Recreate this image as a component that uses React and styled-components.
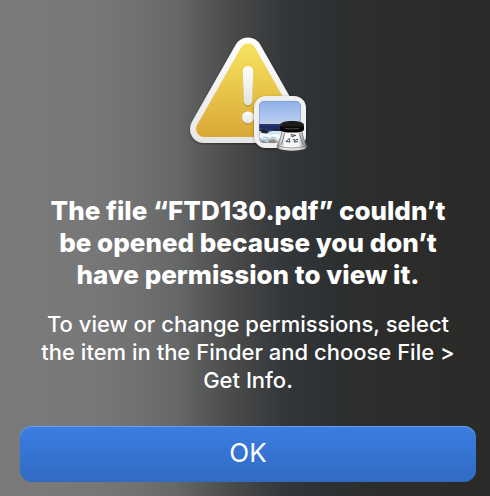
import React from 'react'
import styled, { createGlobalStyle } from 'styled-components'

const GlobalStyle = createGlobalStyle`
*{
  box-sizing:border-box;
}
body{
  margin:0;
  font-family:Inter, "Liberation Sans", sans-serif;
  background-color:#2c2c2b;
}
`

const Dialog = styled.main`
display:flex;
flex-direction:column;
align-items:center;
min-height:100vh;
padding:30px 14px 14px 20px;
color:white;
text-align:center;
background:linear-gradient(
  90deg,
  #7b7b7b 0%,
  #777777 20%,
  #717171 28%,
  #666767 36%,
  #575959 42%,
  #484a4a 48%,
  #3b3d3f 54%,
  #313538 60%,
  #2d3031 68%,
  #2c2c2b 80%,
  #2a2a29 100%
);
`

const Icon = styled.svg`
width:128px;
height:128px;
margin-bottom:37px;
`

const Title = styled.h1`
margin:0 0 19px;
max-width:416px;
font-size:26px;
line-height:32px;
font-weight:800;
`

const Message = styled.p`
margin:0;
max-width:424px;
font-size:22px;
line-height:28px;
font-weight:500;
`

const Button = styled.button`
width:100%;
height:56px;
margin-top:auto;
padding:0 0 4px;
border:none;
border-radius:12px;
background:linear-gradient(#3b7de2, #306bc3);
box-shadow:inset 0 1px 0 #6c9dea;
color:white;
font-family:inherit;
font-size:26px;
font-weight:400;
cursor:pointer;
`

function WarningIcon() {
  return (
    <Icon viewBox="0 0 128 128" aria-hidden="true">
      <defs>
        <linearGradient id="frame" x1="0" y1="7" x2="0" y2="113" gradientUnits="userSpaceOnUse">
          <stop offset="0" stopColor="#ffffff" />
          <stop offset="1" stopColor="#e6e6e6" />
        </linearGradient>
        <linearGradient id="yellow" x1="0" y1="13" x2="0" y2="107" gradientUnits="userSpaceOnUse">
          <stop offset="0" stopColor="#f7e35f" />
          <stop offset="0.5" stopColor="#e8c64a" />
          <stop offset="1" stopColor="#d9a837" />
        </linearGradient>
        <linearGradient id="mark" x1="0" y1="0" x2="0" y2="1">
          <stop offset="0" stopColor="#ffffff" />
          <stop offset="1" stopColor="#e2e2e0" />
        </linearGradient>
        <linearGradient id="sky" x1="0" y1="0" x2="0" y2="1">
          <stop offset="0" stopColor="#8fb0ea" />
          <stop offset="0.75" stopColor="#b3c8ee" />
          <stop offset="1" stopColor="#c6cfe4" />
        </linearGradient>
        <linearGradient id="cap" x1="0" y1="0" x2="0" y2="1">
          <stop offset="0" stopColor="#1a1a1a" />
          <stop offset="0.35" stopColor="#303030" />
          <stop offset="0.5" stopColor="#0a0a0a" />
          <stop offset="1" stopColor="#000000" />
        </linearGradient>
        <linearGradient id="glass" x1="0" y1="0" x2="1" y2="0">
          <stop offset="0" stopColor="#77787b" />
          <stop offset="0.14" stopColor="#d9dadb" />
          <stop offset="0.3" stopColor="#fafafa" />
          <stop offset="0.72" stopColor="#f4f4f4" />
          <stop offset="0.86" stopColor="#b9babc" />
          <stop offset="1" stopColor="#77787b" />
        </linearGradient>
        <filter id="shadow" x="-20%" y="-20%" width="140%" height="140%">
          <feDropShadow dx="0" dy="1" stdDeviation="1.5" floodColor="#000000" floodOpacity="0.4" />
        </filter>
        <clipPath id="photo">
          <rect x="75" y="71" width="42" height="42" rx="5" />
        </clipPath>
      </defs>

      {/* triangle */}
      <g strokeLinejoin="round">
        <path d="M64 21.5 L108 99 H20 Z" fill="url(#frame)" stroke="url(#frame)" strokeWidth="28" filter="url(#shadow)" />
        <path d="M64 21.5 L108 99 H20 Z" fill="url(#yellow)" stroke="url(#yellow)" strokeWidth="16" />
      </g>
      <g fill="#8a6a1c" opacity="0.4">
        <path d="M58.7 42 a5.3 5.3 0 0 1 10.6 0 L68.2 72.5 a4.2 4.2 0 0 1 -8.4 0 Z" />
        <circle cx="64" cy="88.8" r="6" />
      </g>
      <path d="M58.7 41.3 a5.3 5.3 0 0 1 10.6 0 L68.2 71 a4.2 4.2 0 0 1 -8.4 0 Z" fill="url(#mark)" />
      <circle cx="64" cy="87.5" r="6" fill="url(#mark)" />

      {/* preview badge */}
      <rect x="70" y="66" width="52" height="52" rx="12" fill="#f0f0f0" filter="url(#shadow)" />
      <g clipPath="url(#photo)">
        <rect x="75" y="71" width="42" height="24" fill="url(#sky)" />
        <rect x="75" y="94" width="42" height="7" fill="#1f2a63" />
        <path d="M75 95 H117" stroke="#34437f" strokeWidth="1" />
        <path d="M75 98.5 h6 l3 1.5 h10 v3 h-19 Z" fill="#2d4a78" />
        <path d="M75 101 l8 1 6 -1 h28 v12 h-42 Z" fill="#cfe5f1" />
        <path d="M75 104 l6 -1 5 2 7 -1 5 2 v3 l-9 -1 -8 1 -6 -1 Z" fill="#f5fbfd" />
        <path d="M76 100 l4 -1 5 2.5 -2 2 -5 -.5 Z M88 99.5 l4 -.8 3 1.3 -3 1 Z" fill="#1d222c" />
        <path d="M75 108 l6 1 5 -1 6 1.5 4 3.5 h-21 Z" fill="#a9cbdc" />
        <path d="M75 110.5 l5 .5 3 2 h-8 Z M84 111 l5 -2 4 2.5 -2 1.5 h-6 Z" fill="#a08766" />
        <path d="M79 107 l5 .8 M87 107 l5 1" stroke="#7fa9c6" strokeWidth="0.8" />
      </g>
      <rect x="75.4" y="71.4" width="41.2" height="41.2" rx="5" fill="none" stroke="#6e87b8" strokeOpacity="0.5" strokeWidth="0.8" />

      {/* loupe */}
      <path d="M98 101 H118 C118.5 107 121 112 122.5 116.5 C123.5 121.5 92 121.5 93 116.5 C95 111 97.5 107 98 101 Z" fill="url(#glass)" stroke="#77787b" strokeWidth="0.8" />
      <path d="M94.5 116 Q108 120 121.5 116" fill="none" stroke="#7c7d80" strokeWidth="0.8" />
      <path d="M95 118.3 Q108 122 121 118.3" fill="none" stroke="#dcdcdc" strokeWidth="0.9" />
      <path d="M100.5 103 L97.5 115 M115.5 103 L119 115" stroke="#77787b" strokeWidth="1" />
      <g fill="none" stroke="#3b4557" strokeWidth="1">
        <path d="M107 104.5 l5 1 M108 107 l3 -1.5 M106.5 106 h2" />
        <path d="M102 111.5 l3 -3 1 3.5 Z M109 109.5 l2.5 .5 -1.5 2 4 -.5 M112 109.5 h2" />
      </g>
      <path d="M96 95 C96 92.5 101 91 108 91 S120 92.5 120 95 V99.5 C120 101.5 115 102.6 108 102.6 S96 101.500 96 99.5 Z" fill="url(#cap)" />
      <ellipse cx="108" cy="94.3" rx="10.5" ry="2.2" fill="#1c1c1c" />
      <path d="M101 98.4 Q108 99.6 115 98.4" fill="none" stroke="#505050" strokeWidth="0.9" />
    </Icon>
  )
}

function App() {
  return (
    <>
      <GlobalStyle />
      <Dialog role="alertdialog" aria-labelledby="title" aria-describedby="message">
        <WarningIcon />
        <Title id="title">The file “FTD130.pdf” couldn’t be opened because you don’t have permission to view it.</Title>
        <Message id="message">
          To view or change permissions, select the item in the Finder and choose File &gt; Get Info.
        </Message>
        <Button type="button">OK</Button>
      </Dialog>
    </>
  )
}

export default App
